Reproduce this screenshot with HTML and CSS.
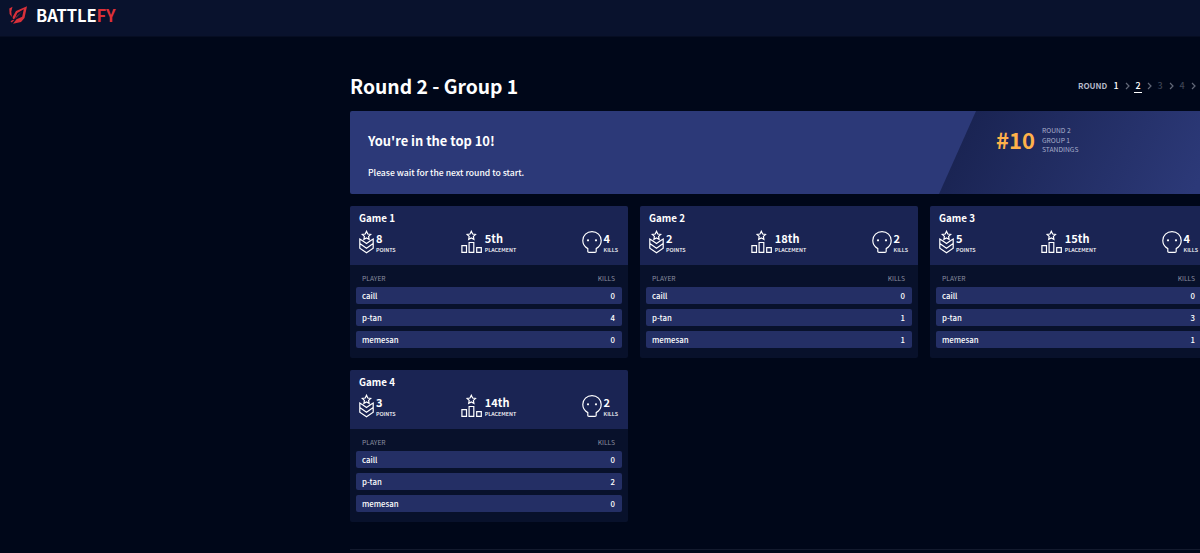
FILE: index.html
```
<!DOCTYPE html>
<html lang="en">
<head>
    <meta charset="UTF-8">
    <meta name="viewport" content="width=device-width, initial-scale=1.0">
    <title>Battlefy - Round 2 - Group 1</title>
    <link rel="stylesheet" href="styles.css">
</head>
<body>
    <svg class="sprite" width="0" height="0">
        <symbol id="icon-points" viewBox="0 0 15 24">
            <path d="M7.500 1.300l1.300 2.700 2.900.4-2.100 2 .5 2.900-2.600-1.400-2.600 1.400.5-2.900-2.100-2 2.900-.4z"/>
            <path d="M3.200 10.600L.8 9v9.200l6.700 4.500 6.700-4.500V9l-2.400 1.600M3.200 10.600l4.300 3 4.300-3M.8 13.600l6.700 4.700 6.700-4.700"/>
        </symbol>
        <symbol id="icon-placement" viewBox="0 0 21 24">
            <path d="M10.300 1.300l1.300 2.700 2.900.4-2.100 2 .5 2.900-2.600-1.400-2.600 1.400.5-2.900-2.100-2 2.900-.4z"/>
            <path d="M.9 15.600h4.600v6.800H.9zM8.100 12.500h4.700v9.900H8.100zM15.700 17.600h4.600v4.800h-4.600z"/>
        </symbol>
        <symbol id="icon-kills" viewBox="0 0 20 24">
            <path d="M5.800 18.600C2.800 17 .8 14 .8 10.600.8 5.500 4.900 1.600 10 1.600s9.200 3.900 9.200 9c0 3.400-2 6.400-5 8v2.600q0 1.200-1.200 1.200H7q-1.200 0-1.200-1.200z"/>
            <circle class="eye" cx="6" cy="10.300" r="1.100"/>
            <circle class="eye" cx="14" cy="10.300" r="1.100"/>
        </symbol>
    </svg>

    <header class="topbar">
        <svg class="logo" viewBox="0 0 18 18">
            <path d="M.3 2.500L3.500.8 2.300 5.500l.5 5.500L.6 8z"/>
            <path d="M18 .2L7 5 3.600 11l.4 2.200 1.800-.6L8.300 7l6.500-3.800-1.600 7.600-5.700 2.500L4 17.800l8-1.800 3.500-4z"/>
            <path d="M13 5.500L7.500 10.500 6 13z"/>
            <path d="M1.500 15.300l2.200-1.300 1.800-.3-2.700 2.800z"/>
        </svg>
        <div class="brand">BATTLE<span>FY</span></div>
    </header>

    <main class="content">
        <div class="title-row">
            <h1>Round 2 - Group 1</h1>
            <div class="rounds">
                <span class="rounds-label">ROUND</span>
                <span class="round">1</span>
                <svg class="chevron" viewBox="0 0 5 8"><path d="M1 1l3 3-3 3"/></svg>
                <span class="round current">2</span>
                <svg class="chevron" viewBox="0 0 5 8"><path d="M1 1l3 3-3 3"/></svg>
                <span class="round upcoming">3</span>
                <svg class="chevron" viewBox="0 0 5 8"><path d="M1 1l3 3-3 3"/></svg>
                <span class="round upcoming">4</span>
                <svg class="chevron" viewBox="0 0 5 8"><path d="M1 1l3 3-3 3"/></svg>
            </div>
        </div>

        <section class="banner">
            <div class="banner-message">
                <h2>You're in the top 10!</h2>
                <p>Please wait for the next round to start.</p>
            </div>
            <div class="banner-rank">
                <div class="rank">#10</div>
                <div class="rank-label">ROUND 2<br>GROUP 1<br>STANDINGS</div>
            </div>
        </section>

        <section class="games">
            <article class="game">
                <div class="game-header">
                    <h3>Game 1</h3>
                    <div class="stats">
                        <div class="stat points"><svg><use href="#icon-points"/></svg><div><b>8</b><small>POINTS</small></div></div>
                        <div class="stat placement"><svg><use href="#icon-placement"/></svg><div><b>5th</b><small>PLACEMENT</small></div></div>
                        <div class="stat kills"><svg><use href="#icon-kills"/></svg><div><b>4</b><small>KILLS</small></div></div>
                    </div>
                </div>
                <div class="players">
                    <div class="players-head"><span>PLAYER</span><span>KILLS</span></div>
                    <div class="player"><span>caill</span><span>0</span></div>
                    <div class="player"><span>p-tan</span><span>4</span></div>
                    <div class="player"><span>memesan</span><span>0</span></div>
                </div>
            </article>

            <article class="game">
                <div class="game-header">
                    <h3>Game 2</h3>
                    <div class="stats">
                        <div class="stat points"><svg><use href="#icon-points"/></svg><div><b>2</b><small>POINTS</small></div></div>
                        <div class="stat placement"><svg><use href="#icon-placement"/></svg><div><b>18th</b><small>PLACEMENT</small></div></div>
                        <div class="stat kills"><svg><use href="#icon-kills"/></svg><div><b>2</b><small>KILLS</small></div></div>
                    </div>
                </div>
                <div class="players">
                    <div class="players-head"><span>PLAYER</span><span>KILLS</span></div>
                    <div class="player"><span>caill</span><span>0</span></div>
                    <div class="player"><span>p-tan</span><span>1</span></div>
                    <div class="player"><span>memesan</span><span>1</span></div>
                </div>
            </article>

            <article class="game">
                <div class="game-header">
                    <h3>Game 3</h3>
                    <div class="stats">
                        <div class="stat points"><svg><use href="#icon-points"/></svg><div><b>5</b><small>POINTS</small></div></div>
                        <div class="stat placement"><svg><use href="#icon-placement"/></svg><div><b>15th</b><small>PLACEMENT</small></div></div>
                        <div class="stat kills"><svg><use href="#icon-kills"/></svg><div><b>4</b><small>KILLS</small></div></div>
                    </div>
                </div>
                <div class="players">
                    <div class="players-head"><span>PLAYER</span><span>KILLS</span></div>
                    <div class="player"><span>caill</span><span>0</span></div>
                    <div class="player"><span>p-tan</span><span>3</span></div>
                    <div class="player"><span>memesan</span><span>1</span></div>
                </div>
            </article>

            <article class="game">
                <div class="game-header">
                    <h3>Game 4</h3>
                    <div class="stats">
                        <div class="stat points"><svg><use href="#icon-points"/></svg><div><b>3</b><small>POINTS</small></div></div>
                        <div class="stat placement"><svg><use href="#icon-placement"/></svg><div><b>14th</b><small>PLACEMENT</small></div></div>
                        <div class="stat kills"><svg><use href="#icon-kills"/></svg><div><b>2</b><small>KILLS</small></div></div>
                    </div>
                </div>
                <div class="players">
                    <div class="players-head"><span>PLAYER</span><span>KILLS</span></div>
                    <div class="player"><span>caill</span><span>0</span></div>
                    <div class="player"><span>p-tan</span><span>2</span></div>
                    <div class="player"><span>memesan</span><span>0</span></div>
                </div>
            </article>
        </section>

        <hr class="divider">
    </main>
</body>
</html>
```
FILE: styles.css
```
* {
    box-sizing: border-box;
}
body {
    margin: 0;
    height: 553px;
    overflow: hidden;
    background: #000719;
    color: #fff;
    font-family: "Noto Sans CJK JP", "Open Sans", sans-serif;
    font-size: 8px;
}
h1, h2, h3, p {
    margin: 0;
}
.sprite {
    display: block;
}
.topbar {
    display: flex;
    align-items: center;
    height: 37px;
    padding: 0 0 7px 9px;
    background: #09122d;
    border-bottom: 1px solid #060d22;
}
.logo {
    width: 18px;
    height: 18px;
    margin-right: 9px;
    fill: #d9303a;
}
.brand {
    font-size: 16.5px;
    font-weight: 700;
    line-height: 18px;
    letter-spacing: -0.05px;
}
.brand span {
    color: #dc3038;
}
.content {
    width: 858px;
    margin-left: 350px;
}
.title-row {
    display: flex;
    justify-content: space-between;
    align-items: center;
    height: 74px;
    padding-top: 24px;
}
h1 {
    font-size: 19.3px;
    font-weight: 700;
    line-height: 30px;
}
.rounds {
    display: flex;
    align-items: center;
    width: 130px;
    line-height: 12px;
}
.rounds-label {
    width: 32px;
    color: #b4b9c8;
    font-weight: 700;
}
.round {
    width: 12px;
    font-size: 9px;
    font-weight: 500;
    text-align: center;
}
.current {
    width: 8px;
    margin: 0 2px;
    border-bottom: 1px solid #fff;
}
.upcoming {
    color: #3d4354;
}
.chevron {
    width: 5px;
    height: 8px;
    margin: 0 2px 0 3px;
    fill: none;
    stroke: #626878;
    stroke-width: 1.2;
}
.banner {
    display: flex;
    height: 83px;
    background: #2c3978;
    border-radius: 2px;
}
.banner-message {
    width: 589px;
    padding: 20px 18px;
}
.banner h2 {
    font-size: 12.9px;
    font-weight: 700;
    line-height: 20px;
}
.banner p {
    margin-top: 14px;
    font-size: 8.6px;
    font-weight: 500;
    line-height: 15px;
}
.banner-rank {
    display: flex;
    flex: 1;
    align-items: flex-start;
    padding: 15px 0 0 57px;
    background: linear-gradient(117deg, #1a2453 12%, #2c3978 95%);
    clip-path: polygon(37px 0, 100% 0, 100% 100%, 0 100%);
}
.rank {
    width: 46px;
    margin-top: -2px;
    color: #ffb14a;
    font-size: 22px;
    font-weight: 700;
    line-height: 30px;
}
.rank-label {
    color: #a9afcb;
    font-size: 6.7px;
    line-height: 9.5px;
}
.games {
    display: grid;
    grid-template-columns: repeat(3, 278px);
    gap: 12px;
    margin-top: 12px;
}
.game {
    height: 152px;
    background: #08112b;
    border-radius: 2px;
    overflow: hidden;
}
.game-header {
    height: 59px;
    padding: 5px 9px 0;
    background: #1a2453;
}
h3 {
    font-size: 9.8px;
    font-weight: 700;
    line-height: 14px;
}
.stats {
    display: flex;
    justify-content: space-between;
    margin-top: 5px;
}
.stat {
    display: flex;
}
.stat svg {
    width: 15px;
    height: 24px;
    margin-right: 2px;
    fill: none;
    stroke: #fff;
    stroke-width: 1.2;
}
.placement svg {
    width: 21px;
    margin-right: 3px;
}
.kills {
    margin-right: 1px;
}
.kills svg {
    width: 20px;
}
.eye {
    fill: #fff;
    stroke: none;
}
.stat b {
    display: block;
    font-size: 11px;
    line-height: 16px;
}
.stat small {
    display: block;
    font-size: 5.4px;
    font-weight: 500;
    line-height: 8px;
}
.players {
    padding: 9px 6px 0;
}
.players-head {
    display: flex;
    justify-content: space-between;
    padding: 0 7px 0 6px;
    color: #8b90a1;
    font-size: 6.7px;
    line-height: 9px;
    margin-bottom: 4px;
}
.player {
    display: flex;
    justify-content: space-between;
    height: 17px;
    margin-bottom: 5px;
    padding: 0 7px 0 6px;
    background: #242f65;
    border-radius: 2px;
    font-size: 7.8px;
    font-weight: 500;
    line-height: 17px;
}
.divider {
    height: 1px;
    margin: 27px 0 0;
    border: 0;
    background: #131a2d;
}
```
